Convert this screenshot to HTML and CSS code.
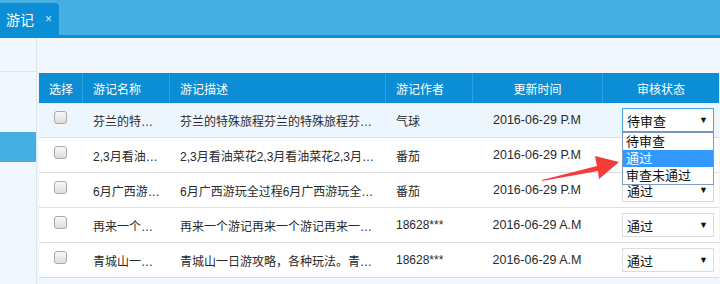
FILE: index.html
```html
<!DOCTYPE html>
<html lang="zh-CN">
<head>
  <meta charset="UTF-8">
  <title>游记管理</title>
  <link rel="stylesheet" href="styles.css">
</head>
<body>

  <!-- Tabs -->
  <div class="topbar">
    <div class="tab">游记<span class="tab-close">×</span></div>
  </div>
  <div class="topline"></div>

  <div class="layout">
    <div class="sidebar">
      <div class="side-top"></div>
      <div class="side-item active"></div>
    </div>

    <div class="main">
      <div class="toolbar"></div>

      <table class="grid">
        <colgroup>
          <col class="c-check">
          <col class="c-name">
          <col class="c-desc">
          <col class="c-author">
          <col class="c-time">
          <col class="c-status">
        </colgroup>
        <thead>
          <tr>
            <th>选择</th>
            <th>游记名称</th>
            <th>游记描述</th>
            <th>游记作者</th>
            <th class="center">更新时间</th>
            <th class="center">审核状态</th>
          </tr>
        </thead>
        <tbody>
          <tr class="hover">
            <td class="check"><span class="box"></span></td>
            <td><div class="cut">芬兰的特殊旅程</div></td>
            <td><div class="cut">芬兰的特殊旅程芬兰的特殊旅程芬兰的特殊旅程</div></td>
            <td>气球</td>
            <td class="center date">2016-06-29 P.M</td>
            <td>
              <div class="sel open">
                <span>待审查</span><span class="caret">▼</span>
                <ul class="options">
                  <li>待审查</li>
                  <li class="picked">通过</li>
                  <li>审查未通过</li>
                </ul>
              </div>
            </td>
          </tr>
          <tr>
            <td class="check"><span class="box"></span></td>
            <td><div class="cut">2,3月看油菜花</div></td>
            <td><div class="cut">2,3月看油菜花2,3月看油菜花2,3月看油菜花</div></td>
            <td>番茄</td>
            <td class="center date">2016-06-29 P.M</td>
            <td><div class="sel"><span>通过</span><span class="caret">▼</span></div></td>
          </tr>
          <tr>
            <td class="check"><span class="box"></span></td>
            <td><div class="cut">6月广西游玩全过程</div></td>
            <td><div class="cut">6月广西游玩全过程6月广西游玩全过程</div></td>
            <td>番茄</td>
            <td class="center date">2016-06-29 P.M</td>
            <td><div class="sel"><span>通过</span><span class="caret">▼</span></div></td>
          </tr>
          <tr>
            <td class="check"><span class="box"></span></td>
            <td><div class="cut">再来一个游记</div></td>
            <td><div class="cut">再来一个游记再来一个游记再来一个游记</div></td>
            <td>18628***</td>
            <td class="center date">2016-06-29 A.M</td>
            <td><div class="sel"><span>通过</span><span class="caret">▼</span></div></td>
          </tr>
          <tr>
            <td class="check"><span class="box"></span></td>
            <td><div class="cut">青城山一日游攻略</div></td>
            <td><div class="cut">青城山一日游攻略，各种玩法。青城山一日游攻略</div></td>
            <td>18628***</td>
            <td class="center date">2016-06-29 A.M</td>
            <td><div class="sel"><span>通过</span><span class="caret">▼</span></div></td>
          </tr>
        </tbody>
      </table>
    </div>
  </div>

  <!-- red pointer drawn over the page -->
  <svg class="pointer" width="720" height="284" viewBox="0 0 720 284">
    <polygon points="542,180 597,166 595,156 619,162 599,179 598,171 542,181" fill="#f53a3a"/>
  </svg>

</body>
</html>
```

FILE: styles.css
```css
body {
  margin: 0;
  width: 720px;
  height: 284px;
  overflow: hidden;
  background: #f0f7fe;
  font-family: "Liberation Sans", "Noto Sans CJK SC", sans-serif;
  font-size: 12px;
  color: #2a2a2a;
}

.topbar {
  height: 35px;
  background: #45aee3;
  display: flex;
  align-items: flex-end;
}

.tab {
  width: 59px;
  height: 32px;
  box-sizing: border-box;
  padding-left: 6px;
  background: #0b8ed6;
  border-radius: 0 4px 0 0;
  color: #fff;
  font-size: 14px;
  display: flex;
  align-items: center;
}

.tab-close {
  margin-left: 11px;
  font-size: 12px;
  color: #cde6f6;
}

.topline {
  height: 3px;
  background: #0b8ed6;
}

.layout {
  display: flex;
}

.sidebar {
  width: 36px;
  flex-shrink: 0;
  height: 246px;
  border-right: 1px solid #dde5ec;
}

.side-top {
  height: 33px;
  border-bottom: 1px solid #dde5ec;
}

.side-item {
  height: 30px;
  margin-top: 60px;
}

.side-item.active {
  background: #45aee3;
}

.main {
  flex: 1;
  padding-left: 2px;
}

.toolbar {
  height: 35px;
}

.grid {
  border-collapse: separate;
  border-spacing: 0;
  table-layout: fixed;
  width: 680px;
  background: #fff;
}

.c-check { width: 43px; }
.c-name { width: 87px; }
.c-desc { width: 216px; }
.c-author { width: 87px; }
.c-time { width: 130px; }
.c-status { width: 117px; }

.grid th {
  height: 30px;
  padding: 0 0 0 10px;
  background: #0b8ed6;
  color: #fff;
  font-weight: normal;
  text-align: left;
  border-left: 1px solid #2ba2e2;
  white-space: nowrap;
}

.grid th:first-child {
  border-left: none;
}

.grid th.center,
.grid td.center {
  text-align: center;
  padding-left: 0;
}

.grid td {
  height: 34px;
  padding: 0 0 0 11px;
  border-bottom: 1px solid #dedede;
  white-space: nowrap;
}

.grid td.date {
  font-size: 12.5px;
}

.grid tr.hover td {
  background: #eef6fd;
}

.cut {
  overflow: hidden;
  text-overflow: ellipsis;
  white-space: nowrap;
  padding-right: 8px;
}

.grid td.check {
  padding: 0;
  text-align: center;
  vertical-align: top;
}

.box {
  display: inline-block;
  width: 13px;
  height: 13px;
  box-sizing: border-box;
  margin-top: 8px;
  border: 1px solid #a9a9a9;
  border-radius: 3px;
  background: linear-gradient(#f8f8f8, #dddddd);
}

.sel {
  position: relative;
  width: 92px;
  height: 24px;
  margin-left: 9px;
  box-sizing: border-box;
  padding: 0 5px 0 4px;
  border: 1px solid #dcdcdc;
  background: #fff;
  color: #111;
  font-size: 13px;
  display: flex;
  align-items: center;
  justify-content: space-between;
}

.sel.open {
  border-color: #45a5e3;
}

.caret {
  font-size: 9px;
  color: #111;
}

.options {
  position: absolute;
  top: 23px;
  left: -1px;
  width: 92px;
  box-sizing: border-box;
  margin: 0;
  padding: 0;
  list-style: none;
  background: #fff;
  border: 1px solid #7f9cc8;
  z-index: 2;
}

.options li {
  height: 17px;
  line-height: 17px;
  padding-left: 3px;
}

.options li.picked {
  background: #3399ff;
  color: #fff;
}

.pointer {
  position: absolute;
  left: 0;
  top: 0;
  pointer-events: none;
  z-index: 3;
}
```
